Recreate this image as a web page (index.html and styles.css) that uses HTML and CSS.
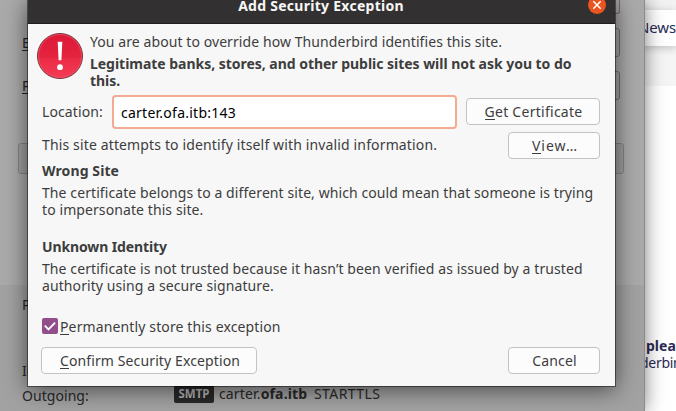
FILE: index.html
```
<!DOCTYPE html>
<html lang="en">
<head>
<meta charset="utf-8">
<title>Add Security Exception</title>
<link rel="stylesheet" href="styles.css">
</head>
<body>
<div class="desktop">
  <section class="browser">
    <div class="browser-tabs"></div>
    <div class="browser-nav"><span class="nav-link">News</span></div>
    <div class="browser-band"></div>
    <div class="browser-page">
      <p class="page-strong">plea</p>
      <p class="page-text">derbin</p>
    </div>
  </section>

  <section class="setup">
    <div class="setup-form">
      <div class="field field-name"><span class="field-label"></span><span class="field-box"></span></div>
      <div class="field"><span class="field-label"><u>E</u></span><span class="field-box"></span></div>
      <div class="field"><span class="field-label"><u>P</u></span><span class="field-box"></span></div>
      <div class="setup-notice"></div>
    </div>
    <div class="setup-result">
      <p class="result-title">P</p>
      <p class="result-row">In</p>
      <div class="result-row result-outgoing">
        <span class="result-label">Outgoing:</span>
        <span class="badge">SMTP</span>
        <span class="host">carter.<b>ofa.itb</b></span>
        <span class="security">STARTTLS</span>
      </div>
    </div>
  </section>

  <section class="dialog" role="dialog">
    <header class="titlebar">
      <h1 class="title">Add Security Exception</h1>
      <span class="close"><svg viewBox="0 0 18 18" width="18" height="18"><circle cx="9" cy="9" r="9" fill="#e95420"/><path d="M5.3 5.3l7.4 7.4M12.7 5.3l-7.4 7.4" stroke="#fff" stroke-width="1.5" fill="none"/></svg></span>
    </header>
    <div class="content">
      <div class="warning">
        <svg class="warning-icon" viewBox="0 0 48 48" width="48" height="48">
          <defs><linearGradient id="red" x1="0" y1="0" x2="0" y2="1"><stop offset="0" stop-color="#dc1736"/><stop offset=".54" stop-color="#e52540"/><stop offset=".56" stop-color="#ea2b46"/><stop offset="1" stop-color="#f63c56"/></linearGradient></defs>
          <circle cx="24" cy="24" r="22.5" fill="url(#red)" stroke="#74323d" stroke-width="1"/>
          <circle cx="24" cy="24" r="21.5" fill="none" stroke="#f05469" stroke-width="1" opacity=".75"/>
          <path d="M21.7 9.8h4.6l-.9 18.5h-2.8z" fill="#fff"/>
          <circle cx="24" cy="35.2" r="2.9" fill="#fff"/>
        </svg>
        <div class="warning-text">
          <p class="intro">You are about to override how Thunderbird identifies this site.</p>
          <p class="strong-warning">Legitimate banks, stores, and other public sites will not ask you to do<br>this.</p>
        </div>
      </div>
      <div class="location">
        <label class="location-label">Location:</label>
        <div class="location-input">carter.ofa.itb:143</div>
        <button class="button get"><span><u>G</u>et Certificate</span></button>
      </div>
      <div class="status">
        <p class="status-text">This site attempts to identify itself with invalid information.</p>
        <button class="button view"><span><u>V</u>iew…</span></button>
      </div>
      <h2 class="heading wrong">Wrong Site</h2>
      <p class="reason reason-wrong">The certificate belongs to a different site, which could mean that someone is trying<br>to impersonate this site.</p>
      <h2 class="heading unknown">Unknown Identity</h2>
      <p class="reason reason-unknown">The certificate is not trusted because it hasn’t been verified as issued by a trusted<br>authority using a secure signature.</p>
      <div class="store">
        <svg class="check" viewBox="0 0 16 16" width="16" height="16"><rect width="16" height="16" rx="2" fill="#924d8b"/><path d="M2.8 7.6l3.7 3.7 6.6-6.7" fill="none" stroke="#fff" stroke-width="1.9"/></svg>
        <span class="store-label"><u>P</u>ermanently store this exception</span>
      </div>
      <footer class="actions">
        <button class="button confirm"><span><u>C</u>onfirm Security Exception</span></button>
        <button class="button cancel"><span>Cancel</span></button>
      </footer>
    </div>
  </section>
</div>
</body>
</html>
```

FILE: styles.css
```
* { box-sizing: border-box; }
html, body { margin: 0; overflow: hidden; }
body { font: 14px/17px "Noto Sans", sans-serif; color: #3d3d3d; }
p, h1, h2 { margin: 0; font-size: 14px; line-height: 17px; }
u { text-decoration: none; border-bottom: 1px solid currentColor; display: inline-block; height: 17px; }
.desktop { position: relative; width: 676px; height: 411px; overflow: hidden; background: #fff; }

.browser { position: absolute; left: 636px; top: 0; width: 40px; height: 411px; color: #2b2b55; white-space: nowrap; overflow: hidden; }
.browser-tabs { height: 10px; background: #f2f2f2; }
.browser-nav { height: 36px; padding-top: 9px; background: #fff; box-shadow: 0 2px 8px rgba(0,0,0,.22); position: relative; }
.nav-link { font-size: 15px; letter-spacing: -.1px; padding-left: 2px; }
.browser-band { height: 40px; background: #f5f5f5; }
.browser-page { padding-top: 251px; }
.page-strong { padding-left: 10px; font-weight: 700; }
.page-text { padding-left: 4px; letter-spacing: -.3px; }

.setup { position: absolute; left: 0; top: 0; width: 645px; height: 411px; background: #aaa; border-right: 1px solid #8b8b8b; box-shadow: 0 0 18px rgba(0,0,0,.5); color: #282828; }
.setup-form { height: 285px; padding: 0 20px 0 22px; }
.field { display: flex; justify-content: space-between; height: 43px; padding-top: 6px; width: 598px; }
.field-name { height: 22px; padding-top: 0; }
.field-label { padding-top: 6px; }
.field-box { width: 200px; height: 29px; border: 1px solid #717171; border-radius: 3px; background: #a5a5a5; }
.field-name .field-box { height: 14px; border-top: 0; border-radius: 0 0 3px 3px; }
.setup-notice { margin: 35px 0 0 -4px; width: 606px; height: 31px; border: 1px solid #858585; border-radius: 3px; background: #a0a0a0; }
.setup-result { height: 126px; background: #a2a2a2; padding: 11px 0 0 22px; }
.result-title { height: 66px; }
.result-row { height: 25px; }
.result-outgoing { display: flex; }
.result-label { width: 152px; letter-spacing: .05px; }
.badge { width: 40px; height: 18px; margin-top: -2px; background: #282828; border-radius: 2px; color: #b5b5b5; font-size: 11.5px; font-weight: 700; line-height: 17px; text-align: center; }
.host { margin: -2px 0 0 5px; width: 95px; white-space: nowrap; letter-spacing: .15px; }
.security { margin-top: -2px; letter-spacing: .4px; }

.dialog { position: absolute; left: 28px; top: 0; width: 587px; height: 386px; background: #f7f7f7; box-shadow: 0 0 0 1px rgba(0,0,0,.45), 0 3px 22px rgba(0,0,0,.6); white-space: nowrap; }
.titlebar { display: flex; justify-content: center; height: 24px; background: #333031; border-bottom: 1px solid #1f1d1e; position: relative; }
.title { color: #f7f7f7; margin: -3px 1px 0 0; letter-spacing: .27px; }
.close { position: absolute; left: 560px; top: -4px; height: 18px; }
.close svg { display: block; }
.content { padding: 9px 15px 0 14px; }
.warning { display: flex; height: 62px; }
.warning-icon { margin: -1px 5px 0 -6px; }
.warning-text { padding-left: 1px; }
.intro { letter-spacing: .08px; }
.strong-warning { margin-top: 5px; font-weight: 700; letter-spacing: -.03px; }
.location { display: flex; align-items: center; height: 34px; }
.location-label { width: 70px; margin-top: -2px; letter-spacing: .1px; }
.location-input { width: 345px; height: 34px; border: 2px solid #f3aa90; border-radius: 4px; background: #fff; color: #000; padding: 7px; margin-right: 9px; letter-spacing: .25px; }
.button { height: 27px; padding: 0 0 0 1px; border: 1px solid #c3c3c3; border-radius: 4px; background: #fcfcfc; color: #3d3d3d; font: inherit; line-height: 17px; text-align: center; }
.get { width: 134px; letter-spacing: .27px; margin-top: -1px; }
.status { display: flex; justify-content: space-between; margin-top: 3px; height: 27px; }
.status-text { padding-top: 4px; letter-spacing: .14px; }
.view, .cancel { width: 92px; }
.view { letter-spacing: 1px; padding-left: 2px; }
.cancel { letter-spacing: .15px; }
.heading { font-weight: 700; margin-top: 3px; }
.wrong { letter-spacing: .1px; }
.reason { margin-top: 5px; letter-spacing: .09px; }
.unknown { margin-top: 20px; letter-spacing: -.12px; }
.store { display: flex; height: 17px; margin-top: 24px; }
.check { margin-right: 2px; }
.store-label { letter-spacing: .13px; }
.actions { display: flex; justify-content: space-between; margin: 12px 0 0 -1px; }
.confirm { width: 216px; letter-spacing: .12px; padding-left: 2px; }
```
